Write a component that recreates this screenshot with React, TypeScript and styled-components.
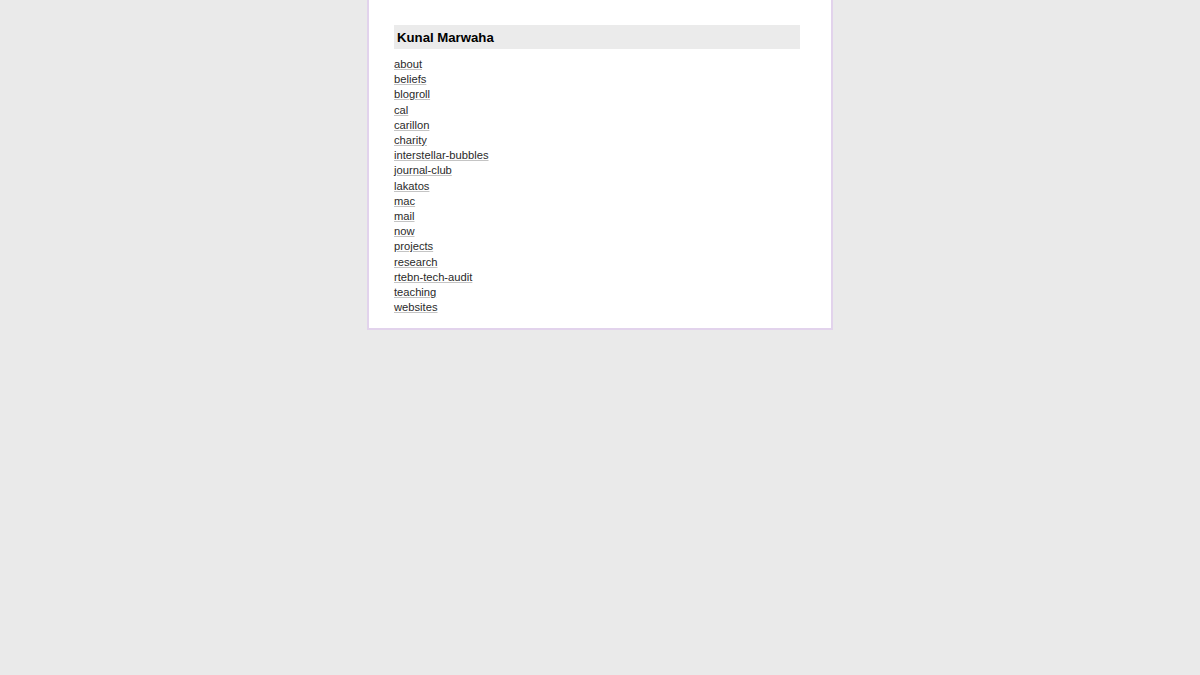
import React from "react";
import styled, { createGlobalStyle } from "styled-components";

const Global = createGlobalStyle`
  html, body {
    margin: 0;
    padding: 0;
    background: #eaeaea;
  }
  body {
    font-family: "Liberation Sans", Arial, sans-serif;
    color: #222;
  }
`;

const Page = styled.main`
  width: 412px;
  margin: 0 auto;
  background: #fff;
  border: 2px solid #e2d3ec;
  border-top: none;
  padding: 25px 25px 13px;
`;

const Title = styled.h1`
  margin: 0 6px 0 0;
  background: #ebebeb;
  font-size: 13.2px;
  font-weight: bold;
  line-height: 24px;
  padding: 1px 3px 0;
  height: 24px;
  box-sizing: border-box;
  color: #000;
`;

const List = styled.ul`
  list-style: none;
  margin: 8px 0 0;
  padding: 0;
`;

const Item = styled.li`
  font-size: 11.2px;
  line-height: 15.2px;
`;

const Anchor = styled.a`
  color: #2a2a2a;
  text-decoration: underline;
  text-decoration-color: #c4c4c4;
  text-underline-offset: 1px;
`;

const links = [
  "about",
  "beliefs",
  "blogroll",
  "cal",
  "carillon",
  "charity",
  "interstellar-bubbles",
  "journal-club",
  "lakatos",
  "mac",
  "mail",
  "now",
  "projects",
  "research",
  "rtebn-tech-audit",
  "teaching",
  "websites",
];

export default function App() {
  return (
    <>
      <Global />
      <Page>
        <Title>Kunal Marwaha</Title>
        <List>
          {links.map((l) => (
            <Item key={l}>
              <Anchor href={`/${l}`}>{l}</Anchor>
            </Item>
          ))}
        </List>
      </Page>
    </>
  );
}
